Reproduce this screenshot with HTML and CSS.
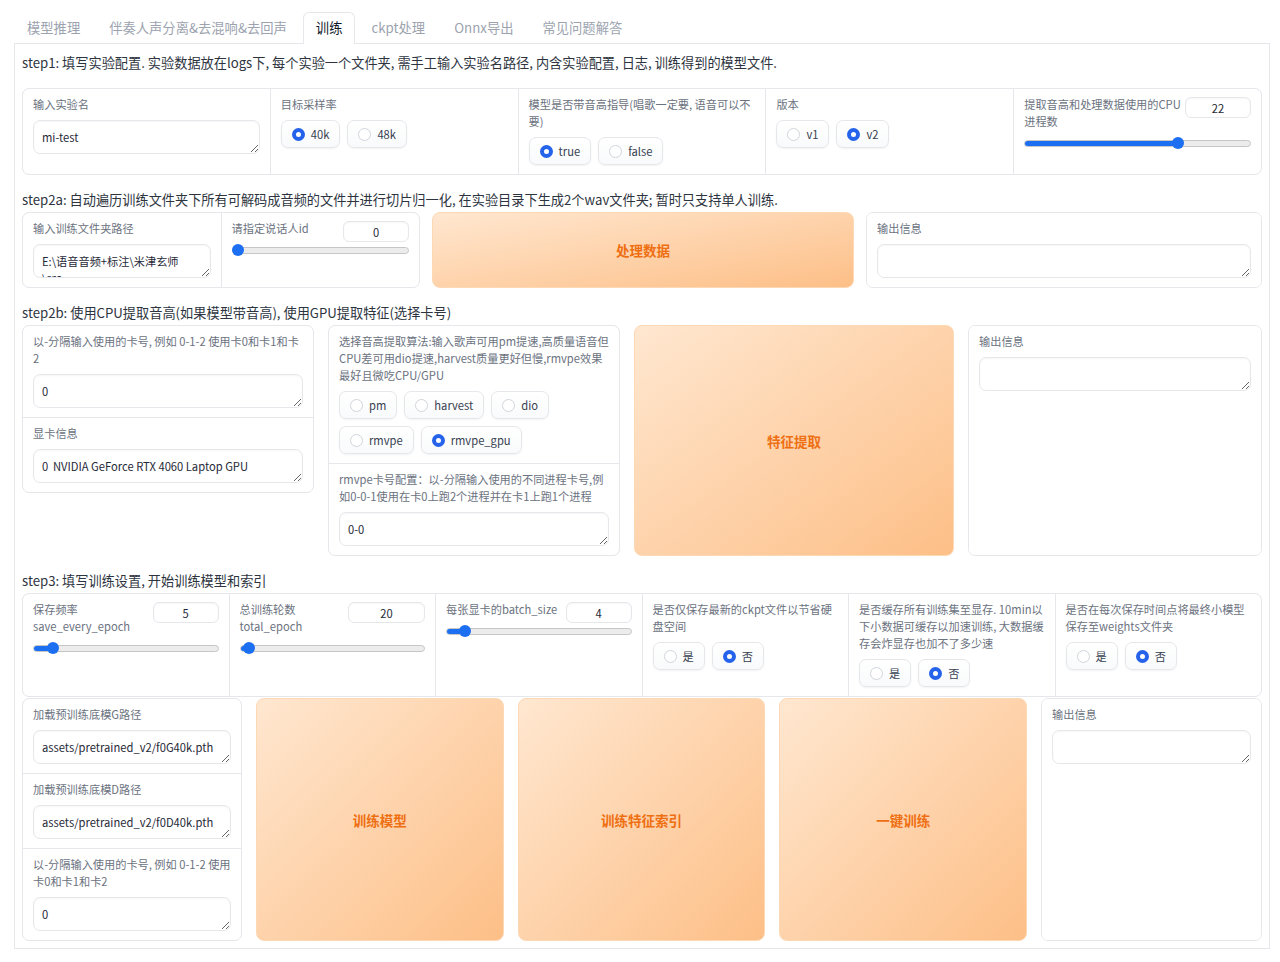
FILE: index.html
```html
<!DOCTYPE html>
<html lang="zh">
<head>
  <meta charset="UTF-8">
  <meta name="viewport" content="width=device-width, initial-scale=1.0">
  <title>RVC WebUI - 训练</title>
  <link rel="stylesheet" href="styles.css">
</head>
<body>
  <div class="app">
    <div class="tabs">
      <button class="tab">模型推理</button>
      <button class="tab">伴奏人声分离&amp;去混响&amp;去回声</button>
      <button class="tab active">训练</button>
      <button class="tab">ckpt处理</button>
      <button class="tab">Onnx导出</button>
      <button class="tab">常见问题解答</button>
    </div>

    <div class="panel">
      <!-- step1 -->
      <p class="md md-first">step1: 填写实验配置. 实验数据放在logs下, 每个实验一个文件夹, 需手工输入实验名路径, 内含实验配置, 日志, 训练得到的模型文件.</p>
      <div class="form">
        <div class="block">
          <span class="label">输入实验名</span>
          <textarea class="tb" rows="1">mi-test</textarea>
        </div>
        <div class="block">
          <span class="label">目标采样率</span>
          <div class="radios">
            <label class="radio checked"><span class="dot"></span>40k</label>
            <label class="radio"><span class="dot"></span>48k</label>
          </div>
        </div>
        <div class="block">
          <span class="label">模型是否带音高指导(唱歌一定要, 语音可以不要)</span>
          <div class="radios">
            <label class="radio checked"><span class="dot"></span>true</label>
            <label class="radio"><span class="dot"></span>false</label>
          </div>
        </div>
        <div class="block">
          <span class="label">版本</span>
          <div class="radios">
            <label class="radio"><span class="dot"></span>v1</label>
            <label class="radio checked"><span class="dot"></span>v2</label>
          </div>
        </div>
        <div class="block">
          <div class="shead">
            <span class="label">提取音高和处理数据使用的CPU进程数</span>
            <input class="num" value="22" readonly>
          </div>
          <div class="slider" style="--p:0.69">
            <div class="track"><div class="fill"></div></div>
            <span class="thumb"></span>
          </div>
        </div>
      </div>

      <!-- step2a -->
      <p class="md">step2a: 自动遍历训练文件夹下所有可解码成音频的文件并进行切片归一化, 在实验目录下生成2个wav文件夹; 暂时只支持单人训练.</p>
      <div class="row row-2a">
        <div class="form data-form">
          <div class="block">
            <span class="label">输入训练文件夹路径</span>
            <textarea class="tb" rows="1">E:\语音音频+标注\米津玄师\src</textarea>
          </div>
          <div class="block">
            <div class="shead">
              <span class="label">请指定说话人id</span>
              <input class="num" value="0" readonly>
            </div>
            <div class="slider" style="--p:0">
              <div class="track"><div class="fill"></div></div>
              <span class="thumb"></span>
            </div>
          </div>
        </div>
        <button class="btn">处理数据</button>
        <div class="form out-2a">
          <div class="block">
            <span class="label">输出信息</span>
            <textarea class="tb" rows="1"></textarea>
          </div>
        </div>
      </div>

      <!-- step2b -->
      <p class="md">step2b: 使用CPU提取音高(如果模型带音高), 使用GPU提取特征(选择卡号)</p>
      <div class="row">
        <div class="form stack gpu-col">
          <div class="block">
            <span class="label">以-分隔输入使用的卡号, 例如 0-1-2 使用卡0和卡1和卡2</span>
            <textarea class="tb" rows="1">0</textarea>
          </div>
          <div class="block">
            <span class="label">显卡信息</span>
            <textarea class="tb" rows="1">0	NVIDIA GeForce RTX 4060 Laptop GPU</textarea>
          </div>
        </div>
        <div class="form stack pitch-col">
          <div class="block">
            <span class="label">选择音高提取算法:输入歌声可用pm提速,高质量语音但CPU差可用dio提速,harvest质量更好但慢,rmvpe效果最好且微吃CPU/GPU</span>
            <div class="radios">
              <label class="radio"><span class="dot"></span>pm</label>
              <label class="radio"><span class="dot"></span>harvest</label>
              <label class="radio"><span class="dot"></span>dio</label>
              <label class="radio"><span class="dot"></span>rmvpe</label>
              <label class="radio checked"><span class="dot"></span>rmvpe_gpu</label>
            </div>
          </div>
          <div class="block">
            <span class="label">rmvpe卡号配置：以-分隔输入使用的不同进程卡号,例如0-0-1使用在卡0上跑2个进程并在卡1上跑1个进程</span>
            <textarea class="tb" rows="1">0-0</textarea>
          </div>
        </div>
        <button class="btn">特征提取</button>
        <div class="form out-2b">
          <div class="block">
            <span class="label">输出信息</span>
            <textarea class="tb" rows="1"></textarea>
          </div>
        </div>
      </div>

      <!-- step3 -->
      <p class="md md-3">step3: 填写训练设置, 开始训练模型和索引</p>
      <div class="form">
        <div class="block">
          <div class="shead">
            <span class="label">保存频率save_every_epoch</span>
            <input class="num" value="5" readonly>
          </div>
          <div class="slider" style="--p:0.08">
            <div class="track"><div class="fill"></div></div>
            <span class="thumb"></span>
          </div>
        </div>
        <div class="block">
          <div class="shead">
            <span class="label">总训练轮数total_epoch</span>
            <input class="num num-wide" value="20" readonly>
          </div>
          <div class="slider" style="--p:0.018">
            <div class="track"><div class="fill"></div></div>
            <span class="thumb"></span>
          </div>
        </div>
        <div class="block">
          <div class="shead">
            <span class="label">每张显卡的batch_size</span>
            <input class="num" value="4" readonly>
          </div>
          <div class="slider" style="--p:0.077">
            <div class="track"><div class="fill"></div></div>
            <span class="thumb"></span>
          </div>
        </div>
        <div class="block">
          <span class="label">是否仅保存最新的ckpt文件以节省硬盘空间</span>
          <div class="radios">
            <label class="radio"><span class="dot"></span>是</label>
            <label class="radio checked"><span class="dot"></span>否</label>
          </div>
        </div>
        <div class="block">
          <span class="label">是否缓存所有训练集至显存. 10min以下小数据可缓存以加速训练, 大数据缓存会炸显存也加不了多少速</span>
          <div class="radios">
            <label class="radio"><span class="dot"></span>是</label>
            <label class="radio checked"><span class="dot"></span>否</label>
          </div>
        </div>
        <div class="block">
          <span class="label">是否在每次保存时间点将最终小模型保存至weights文件夹</span>
          <div class="radios">
            <label class="radio"><span class="dot"></span>是</label>
            <label class="radio checked"><span class="dot"></span>否</label>
          </div>
        </div>
      </div>

      <div class="row row-train">
        <div class="form stack pretrain-col">
          <div class="block">
            <span class="label">加载预训练底模G路径</span>
            <textarea class="tb" rows="1">assets/pretrained_v2/f0G40k.pth</textarea>
          </div>
          <div class="block">
            <span class="label">加载预训练底模D路径</span>
            <textarea class="tb" rows="1">assets/pretrained_v2/f0D40k.pth</textarea>
          </div>
          <div class="block">
            <span class="label">以-分隔输入使用的卡号, 例如 0-1-2 使用卡0和卡1和卡2</span>
            <textarea class="tb" rows="1">0</textarea>
          </div>
        </div>
        <button class="btn">训练模型</button>
        <button class="btn">训练特征索引</button>
        <button class="btn">一键训练</button>
        <div class="form out-3">
          <div class="block">
            <span class="label">输出信息</span>
            <textarea class="tb" rows="1"></textarea>
          </div>
        </div>
      </div>
    </div>
  </div>
</body>
</html>
```

FILE: styles.css
```css
* {
  box-sizing: border-box;
}

body {
  margin: 0;
  background: #fff;
  font-family: "Noto Sans CJK SC", Lato, sans-serif;
  color: #1f2937;
}

.app {
  padding: 12px 10px 0 14px;
}

/* Tabs */
.tabs {
  display: flex;
  gap: 3px;
  height: 31px;
}

.tab {
  padding: 0 12px 2px;
  border: 1px solid transparent;
  border-bottom: none;
  border-radius: 6px 6px 0 0;
  background: none;
  font-family: inherit;
  font-size: 13.3px;
  color: #9ca3af;
}

.tab.active {
  position: relative;
  z-index: 1;
  height: 32px;
  border-color: #e5e7eb;
  background: #fff;
  color: #111827;
}

.panel {
  border: 1px solid #e5e7eb;
  padding: 9px 7px 7px;
}

/* Markdown step titles */
.md {
  margin: 15px 0 2px;
  font-size: 13.2px;
  line-height: 20px;
  color: #2d3440;
}

.md-first {
  margin: 0 0 15px;
}

/* Rows and forms */
.row {
  display: flex;
  gap: 14px;
}

.row-2a {
  gap: 12px;
}

.row-train {
  margin-top: 1px;
}

.form {
  display: flex;
  gap: 1px;
  background: #e5e7eb;
  border: 1px solid #e5e7eb;
  border-radius: 7px;
  overflow: hidden;
}

.form.stack {
  flex-direction: column;
}

.block {
  flex: 1;
  min-width: 0;
  padding: 7px 10px 9px;
  background: #fff;
}

.form.stack .block {
  flex: none;
}

.data-form { flex: 0 0 398px; }
.out-2a { flex: 0 0 396px; }
.gpu-col { flex: 0 0 292px; align-self: flex-start; }
.pitch-col { flex: 0 0 292px; }
.out-2b { flex: 0 0 294px; }
.pretrain-col { flex: 0 0 220px; }
.out-3 { flex: 0 0 221px; }

.label {
  display: block;
  margin-bottom: 7px;
  font-size: 11.2px;
  line-height: 17px;
  color: #6b7280;
}

/* Textboxes */
.tb {
  display: block;
  width: 100%;
  height: 34px;
  margin-top: 1px;
  padding: 8px 12px 8px 8px;
  border: 1px solid #e5e7eb;
  border-radius: 7px;
  box-shadow: inset 0 1px 2px rgba(0, 0, 0, 0.04);
  font-family: inherit;
  font-size: 11.2px;
  line-height: 17px;
  color: #1f2937;
  resize: vertical;
  overflow: hidden;
  tab-size: 11px;
}

/* Radio groups */
.radios {
  display: flex;
  flex-wrap: wrap;
  gap: 7px;
}

.radio {
  display: flex;
  align-items: center;
  gap: 6px;
  height: 28px;
  padding: 0 10px;
  border: 1px solid #e5e7eb;
  border-radius: 7px;
  background: linear-gradient(#fff, #f9fafb);
  box-shadow: 0 1px 2px rgba(0, 0, 0, 0.05);
  font-size: 11.2px;
  color: #374151;
}

.dot {
  width: 13px;
  height: 13px;
  border: 1px solid #d1d5db;
  border-radius: 50%;
  background: #fff;
}

.radio.checked .dot {
  border: 4px solid #2563eb;
}

/* Sliders */
.shead {
  display: flex;
  justify-content: space-between;
  align-items: flex-start;
  gap: 2px;
}

.shead .label {
  margin-bottom: 5px;
}

.num {
  flex: none;
  width: 66px;
  height: 21px;
  margin-top: 1px;
  border: 1px solid #e5e7eb;
  border-radius: 6px;
  box-shadow: inset 0 1px 2px rgba(0, 0, 0, 0.04);
  font-family: inherit;
  font-size: 11.2px;
  text-align: center;
  color: #1f2937;
  outline: none;
}

.num-wide {
  width: 77px;
}

.slider {
  position: relative;
  height: 12px;
  margin-top: 2px;
  padding-top: 3px;
}

.track {
  height: 7px;
  border: 1px solid #c6c6c6;
  border-radius: 4px;
  background: #ececec;
  overflow: hidden;
}

.fill {
  width: calc(var(--p) * (100% - 12px) + 6px);
  height: 100%;
  background: #1d6ff2;
}

.thumb {
  position: absolute;
  top: 0;
  left: calc(var(--p) * (100% - 12px));
  width: 12px;
  height: 12px;
  border-radius: 50%;
  background: #1d6ff2;
}

/* Primary buttons */
.btn {
  flex: 1;
  border: 1px solid #fdd8b4;
  border-radius: 8px;
  background: linear-gradient(to bottom right, #ffe7d0, #fdbf87);
  font-family: inherit;
  font-size: 13.5px;
  font-weight: 700;
  color: #ee6f12;
}
```
